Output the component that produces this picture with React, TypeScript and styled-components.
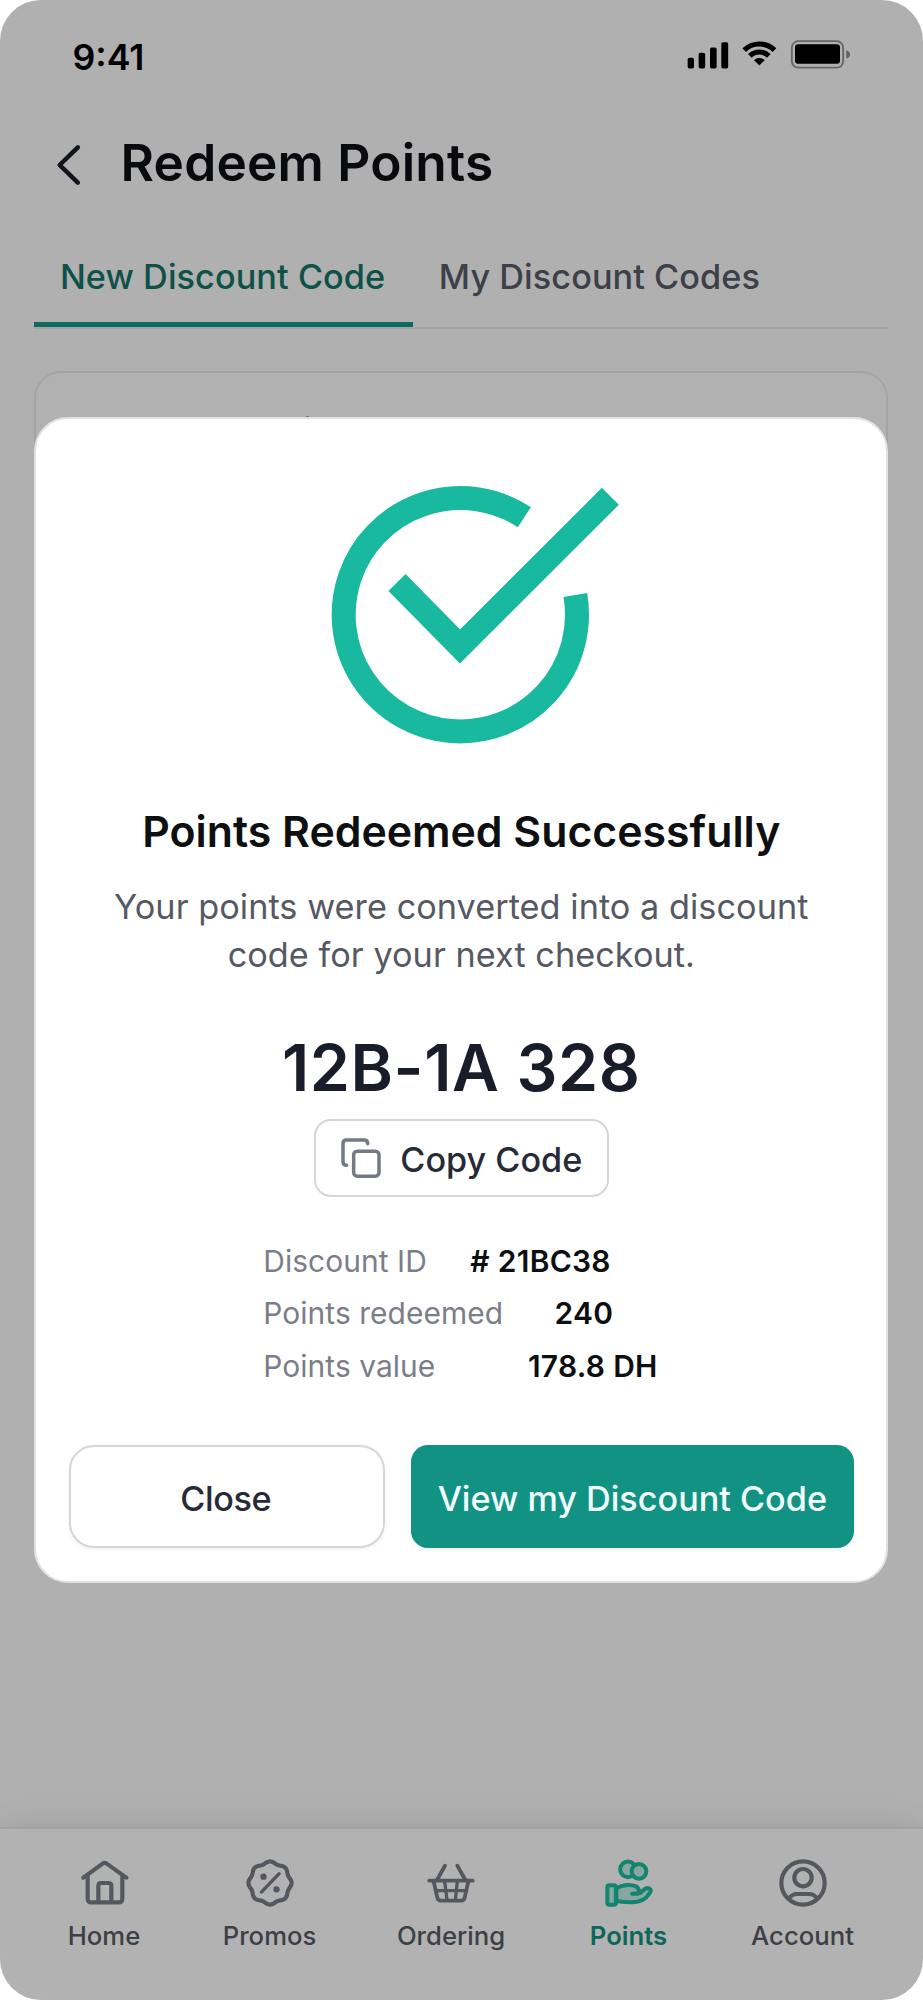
import React from "react";
import styled, { createGlobalStyle } from "styled-components";

const GlobalStyle = createGlobalStyle`
  *, *::before, *::after { box-sizing: border-box; }
  body {
    margin: 0;
    background: #fff;
    font-family: Inter, "Liberation Sans", sans-serif;
  }
  button { font: inherit; cursor: pointer; }
  svg { display: block; flex: none; }
`;

const Screen = styled.div`
  position: relative;
  display: flex;
  flex-direction: column;
  width: 922.5px;
  height: 2000px;
  border-radius: 41px;
  overflow: hidden;
  background: #fcfcfc;
`;

const StatusBar = styled.div`
  display: flex;
  align-items: center;
  justify-content: space-between;
  height: 115px;
  padding: 0 72px 0 72.5px;
`;

const Clock = styled.span`
  margin-bottom: 2px;
  font-size: 35.7px;
  font-weight: 600;
  color: #000;
`;

const StatusIcons = styled.svg`
  width: 165px;
  height: 30.7px;
  margin-bottom: 7px;
`;

const Header = styled.header`
  display: flex;
  align-items: center;
  height: 94px;
  padding-left: 56px;
  gap: 38.5px;
`;

const BackIcon = styled.svg`
  width: 26px;
  height: 44px;
  margin-top: 5px;
`;

const PageTitle = styled.h1`
  margin: 0 0 1px;
  font-size: 51.4px;
  font-weight: 600;
  letter-spacing: 0.2px;
  color: #0e0f14;
`;

const Tabs = styled.nav`
  display: flex;
  height: 97px;
  margin: 23px 34.2px 0 34.3px;
  border-bottom: 2px solid #ececec;
`;

const Tab = styled.button<{ $active?: boolean }>`
  display: flex;
  align-items: center;
  height: 95px;
  padding: 0 28px 2px 25.6px;
  border: 0;
  border-bottom: 5px solid ${(p) => (p.$active ? "#149988" : "transparent")};
  background: none;
  font-size: 34.25px;
  font-weight: 500;
  letter-spacing: 0.06px;
  white-space: nowrap;
  color: ${(p) => (p.$active ? "#147568" : "#585c67")};
`;

const Card = styled.section`
  height: 900px;
  margin: 42px 34.2px 0 34.3px;
  padding: 43px 0 0 270px;
  border: 2px solid #ebebeb;
  border-radius: 27px;
  background: #fefefe;
`;

const CardMark = styled.div`
  width: 3px;
  height: 8px;
  background: #a8a8a8;
`;

const BottomNav = styled.nav`
  display: grid;
  grid-template-columns: 208px 123px 240px 115px 233px;
  align-items: start;
  height: 173px;
  margin-top: auto;
  padding-top: 28.7px;
  border-top: 2px solid #e8e8ea;
  background: #fff;
  box-shadow: 0 -4px 28px rgba(0, 0, 0, 0.09);
  z-index: 1;
`;

const NavItem = styled.div<{ $active?: boolean }>`
  display: flex;
  flex-direction: column;
  align-items: center;
  gap: 12px;
  font-size: 25.7px;
  line-height: 32px;
  font-weight: ${(p) => (p.$active ? 600 : 500)};
  color: ${(p) => (p.$active ? "#149281" : "#585b66")};
`;

const NavIcon = styled.svg<{ $active?: boolean }>`
  width: 50px;
  height: 50px;
  fill: none;
  stroke: ${(p) => (p.$active ? "#1abda1" : "#7a7d88")};
  stroke-width: 12.5;
  stroke-linecap: round;
  stroke-linejoin: round;
`;

const Overlay = styled.div`
  position: absolute;
  inset: 0;
  z-index: 2;
  padding: 417px 34.2px 0 34.3px;
  background: rgba(0, 0, 0, 0.3);
`;

const Modal = styled.div`
  display: flex;
  flex-direction: column;
  align-items: center;
  height: 1166px;
  padding-top: 66px;
  border: 2px solid #e1e1e1;
  border-radius: 34px;
  background: #fff;
`;

const SuccessIcon = styled.svg`
  width: 320px;
  height: 260px;
`;

const ModalTitle = styled.h2`
  margin: 61.4px 0 0;
  font-size: 42.8px;
  line-height: 52px;
  font-weight: 600;
  color: #0d0f11;
`;

const Message = styled.p`
  margin: 25px 0 0;
  font-size: 34.25px;
  line-height: 48px;
  text-align: center;
  letter-spacing: 0.04px;
  color: #565963;
`;

const DiscountCode = styled.div`
  margin-top: 49.2px;
  font-size: 64.4px;
  line-height: 78px;
  font-weight: 600;
  letter-spacing: 0.65px;
  color: #191d2a;
`;

const CopyButton = styled.button`
  display: flex;
  align-items: center;
  justify-content: center;
  gap: 18px;
  width: 295px;
  height: 77.4px;
  margin-top: 12.6px;
  padding: 0;
  border: 2px solid #d6d6d6;
  border-radius: 17px;
  background: #fff;
  font-size: 34.2px;
  font-weight: 500;
  color: #272a37;
`;

const CopyIcon = styled.svg`
  width: 42px;
  height: 42px;
`;

const ButtonLabel = styled.span<{ $tight?: boolean }>`
  padding-top: 3px;
  letter-spacing: ${(p) => (p.$tight ? "-0.35px" : "0")};
`;

const Details = styled.dl`
  width: 396px;
  margin: 38.2px 0 0;
`;

const DetailRow = styled.div<{ $gap: number }>`
  display: flex;
  gap: ${(p) => p.$gap}px;
  font-size: 29.95px;
  line-height: 52.5px;
  white-space: nowrap;
`;

const DetailLabel = styled.dt`
  letter-spacing: 0.05px;
  color: #7b7e88;
`;

const DetailValue = styled.dd`
  margin: 0;
  font-weight: 600;
  letter-spacing: 0.3px;
  color: #0d0f11;
`;

const Actions = styled.div`
  display: flex;
  gap: 26px;
  margin-top: 52.6px;
`;

const ActionButton = styled.button<{ $primary?: boolean }>`
  display: flex;
  align-items: center;
  justify-content: center;
  width: ${(p) => (p.$primary ? 443 : 316)}px;
  height: 103.5px;
  padding: 0 ${(p) => (p.$primary ? 0 : 2)}px 0 0;
  border: ${(p) => (p.$primary ? "0" : "2px solid #d6d6d6")};
  border-radius: ${(p) => (p.$primary ? 17 : 25)}px;
  background: ${(p) => (p.$primary ? "#119283" : "#fff")};
  box-shadow: 0 2px 4px rgba(0, 0, 0, 0.05);
  font-size: 34.2px;
  font-weight: 500;
  color: ${(p) => (p.$primary ? "#f2fffc" : "#272a37")};
`;

const details = [
  { label: "Discount ID", value: "# 21BC38", gap: 43.5 },
  { label: "Points redeemed", value: "240", gap: 51.5 },
  { label: "Points value", value: "178.8 DH", gap: 92.5 },
];

/* Scalloped outline of the promo badge: eight shallow lobes round the centre. */
const badgePath = (cx: number, cy: number) => {
  const steps = 160;
  const points = Array.from({ length: steps }, (_, i) => {
    const a = (i / steps) * Math.PI * 2;
    const r = 61.8 + 3 * Math.cos(8 * a);
    return `${(cx + r * Math.cos(a)).toFixed(2)} ${(cy + r * Math.sin(a)).toFixed(2)}`;
  });
  return `M${points.join("L")}Z`;
};

const navItems = [
  {
    label: "Home",
    viewBox: "238 173 150 150",
    icon: (
      <>
        <path d="M251 232L309 190Q315 185 321 190L380 232" />
        <path d="M264 226V295Q264 306 275 306H357Q368 306 368 295V226" />
        <path d="M296 304V256Q296 248 304 248H327Q335 248 335 256V304" />
      </>
    ),
  },
  {
    label: "Promos",
    viewBox: "733.5 173 150 150",
    icon: (
      <>
        <path d={badgePath(808.5, 248)} />
        <path d="M783 275L836 220" strokeWidth="10" />
        <circle cx="789" cy="229" r="9.5" fill="#7a7d88" stroke="none" />
        <circle cx="828" cy="267" r="9.5" fill="#7a7d88" stroke="none" />
      </>
    ),
  },
  {
    label: "Ordering",
    viewBox: "1279 173 150 150",
    icon: (
      <g strokeWidth="11.5">
        <path d="M1336 196L1312 239M1373 196L1397 239" />
        <path d="M1289 241H1419" />
        <path d="M1302 243L1313 292Q1315 301 1324 301H1384Q1393 301 1395 292L1406 243" />
        <path d="M1308 271H1400M1335 243L1342 299M1373 243L1367 299" strokeWidth="10" />
      </g>
    ),
  },
  {
    label: "Points",
    active: true,
    viewBox: "430 173 150 150",
    icon: (
      <g strokeWidth="12" fill="#c3f0e6">
        <circle cx="502" cy="207" r="23.5" />
        <circle cx="535" cy="213" r="22" />
        <path d="M467 264Q484 254 503 254Q532 254 534 268Q536 280 522 280H514H526Q540 280 547 270Q557 260 567 265Q573 269 567 279Q550 306 515 306Q492 306 467 302Z" />
        <rect x="440" y="254.500" width="25.500" height="58.500" rx="6" />
      </g>
    ),
  },
  {
    label: "Account",
    viewBox: "952.5 173 150 150",
    icon: (
      <>
        <circle cx="1027.5" cy="248" r="65" />
        <circle cx="1027.5" cy="232" r="26" />
        <path d="M985 295Q994 281 1009 281H1046Q1061 281 1070 295" />
      </>
    ),
  },
];

export default function App() {
  return (
    <>
      <GlobalStyle />
      <Screen>
        <StatusBar>
          <Clock>9:41</Clock>
          <StatusIcons viewBox="75 115 495 92">
            <rect x="80" y="171.500" width="19" height="32" rx="5" />
            <rect x="113" y="156.500" width="19.500" height="47" rx="5" />
            <rect x="147" y="140.500" width="20" height="63" rx="5" />
            <rect x="181" y="124.500" width="20.500" height="79" rx="5" />
            <g fill="none" stroke="#000" strokeWidth="15.500">
              <path d="M249.500 148.500A65 65 0 0 1 340.500 148.500" />
              <path d="M266.500 165.500A41 41 0 0 1 323.500 165.500" />
            </g>
            <path d="M295 193L280 178.500A23 23 0 0 1 310 178.500Z" stroke="#000" strokeWidth="2" strokeLinejoin="round" />
            <rect x="392.500" y="121.500" width="154" height="79.500" rx="19" fill="none" stroke="#000" strokeOpacity="0.42" strokeWidth="5.500" />
            <rect x="402" y="131" width="135" height="58" rx="9" />
            <path d="M556 149.500Q567 152 567 161.500Q567 171 556 173.500Z" fillOpacity="0.45" />
          </StatusIcons>
        </StatusBar>

        <Header>
          <BackIcon viewBox="168 428 78 132" fill="none" stroke="#1b1d28" strokeWidth="13.500" strokeLinecap="round" strokeLinejoin="round">
            <path d="M233.500 441L179 494L233.500 547" />
          </BackIcon>
          <PageTitle>Redeem Points</PageTitle>
        </Header>

        <Tabs>
          <Tab $active>New Discount Code</Tab>
          <Tab>My Discount Codes</Tab>
        </Tabs>

        <Card>
          <CardMark />
        </Card>

        <BottomNav>
          {navItems.map((item) => (
            <NavItem key={item.label} $active={item.active}>
              <NavIcon viewBox={item.viewBox} $active={item.active}>
                {item.icon}
              </NavIcon>
              {item.label}
            </NavItem>
          ))}
        </BottomNav>

        <Overlay>
          <Modal>
            <SuccessIcon viewBox="-26 75 960 780" fill="none" stroke="#18b99f" strokeWidth="72">
              <path d="M644 171.500A350 350 0 1 0 797 405" />
              <path d="M262 367.500L451 559.500L902 109" />
            </SuccessIcon>
            <ModalTitle>Points Redeemed Successfully</ModalTitle>
            <Message>
              Your points were converted into a discount
              <br />
              code for your next checkout.
            </Message>
            <DiscountCode>12B-1A 328</DiscountCode>
            <CopyButton>
              <CopyIcon viewBox="270 351 126 126" fill="none" stroke="#747984" strokeWidth="10.500" strokeLinecap="round">
                <path d="M290 436Q279 436 279 425V371Q279 360 290 360H342Q353 360 353 371" />
                <rect x="311" y="393.500" width="76" height="75" rx="11" />
              </CopyIcon>
              <ButtonLabel>Copy Code</ButtonLabel>
            </CopyButton>
            <Details>
              {details.map((d) => (
                <DetailRow key={d.label} $gap={d.gap}>
                  <DetailLabel>{d.label}</DetailLabel>
                  <DetailValue>{d.value}</DetailValue>
                </DetailRow>
              ))}
            </Details>
            <Actions>
              <ActionButton>
                <ButtonLabel $tight>Close</ButtonLabel>
              </ActionButton>
              <ActionButton $primary>
                <ButtonLabel>View my Discount Code</ButtonLabel>
              </ActionButton>
            </Actions>
          </Modal>
        </Overlay>
      </Screen>
    </>
  );
}
